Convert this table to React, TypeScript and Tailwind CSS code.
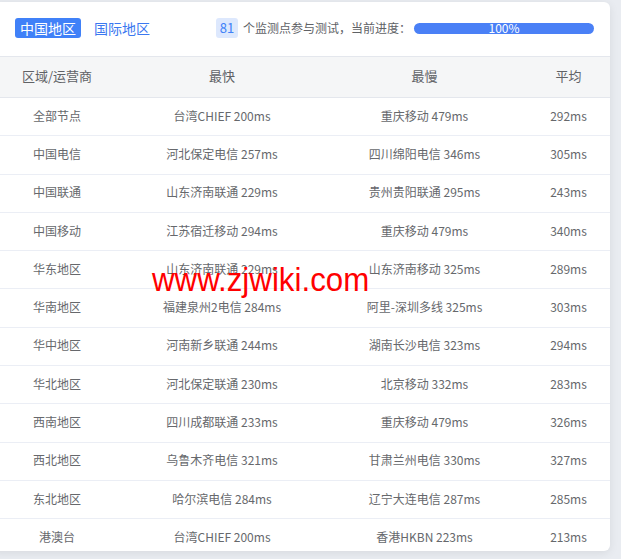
import React from 'react';

// Speed test summary card: region tabs, progress, and per-region fastest/slowest table.

const ROWS: [string, string, string, string][] = [
  ['全部节点', '台湾CHIEF 200ms', '重庆移动 479ms', '292ms'],
  ['中国电信', '河北保定电信 257ms', '四川绵阳电信 346ms', '305ms'],
  ['中国联通', '山东济南联通 229ms', '贵州贵阳联通 295ms', '243ms'],
  ['中国移动', '江苏宿迁移动 294ms', '重庆移动 479ms', '340ms'],
  ['华东地区', '山东济南联通 229ms', '山东济南移动 325ms', '289ms'],
  ['华南地区', '福建泉州2电信 284ms', '阿里-深圳多线 325ms', '303ms'],
  ['华中地区', '河南新乡联通 244ms', '湖南长沙电信 323ms', '294ms'],
  ['华北地区', '河北保定联通 230ms', '北京移动 332ms', '283ms'],
  ['西南地区', '四川成都联通 233ms', '重庆移动 479ms', '326ms'],
  ['西北地区', '乌鲁木齐电信 321ms', '甘肃兰州电信 330ms', '327ms'],
  ['东北地区', '哈尔滨电信 284ms', '辽宁大连电信 287ms', '285ms'],
  ['港澳台', '台湾CHIEF 200ms', '香港HKBN 223ms', '213ms'],
];

const GRID = 'grid grid-cols-[130px_200px_205px_83px]';

export default function App() {
  return (
    <div className="relative h-[559px] w-[621px] overflow-hidden bg-[#e9ecf1] pt-[2px] font-['Noto_Sans_CJK_SC',sans-serif]">
      <div className="-ml-2 h-[549px] w-[618px] overflow-hidden rounded-r-md bg-white shadow-[0_2px_10px_rgba(0,0,0,0.08)]">
        <div className="flex h-[55px] items-center border-b border-[#e4e7ed] pb-[2px] pl-[23px]">
          <button
            type="button"
            className="h-5 rounded-[3px] bg-[#4081f8] px-[5px] text-[14px] leading-5 text-white"
          >
            中国地区
          </button>
          <span className="ml-[13px] text-[14px] leading-5 text-[#3b78f0]">国际地区</span>
          <span className="ml-[66px] flex h-5 w-[22px] items-center justify-center rounded-[3px] bg-[#dde8fd] text-[13px] text-[#4081f8]">
            81
          </span>
          <span className="ml-[5px] text-[12px] text-[#606266]">个监测点参与测试，当前进度：</span>
          <div className="ml-[3px] flex h-[11px] w-[180px] items-center justify-center rounded-full bg-[#4a80f6] text-[12px] leading-none text-white">
            100%
          </div>
        </div>

        <div className={`${GRID} h-[41px] items-center border-b border-[#e4e7ed] bg-[#f5f6f7] pb-[3px] text-center text-[13px] text-[#606266]`}>
          <div>区域/运营商</div>
          <div>最快</div>
          <div>最慢</div>
          <div>平均</div>
        </div>

        {ROWS.map((r) => (
          <div
            key={r[0]}
            className={`${GRID} h-[38.3px] items-center border-b border-[#ebeef5] pb-[2px] text-center text-[12px] text-[#66686c]`}
          >
            <div>{r[0]}</div>
            <div>{r[1]}</div>
            <div>{r[2]}</div>
            <div>{r[3]}</div>
          </div>
        ))}
      </div>

      <div className="pointer-events-none absolute left-[152px] top-[262px] origin-left scale-x-[0.92] font-['Liberation_Sans',sans-serif] text-[34px] leading-none text-[#ff0000]">
        www.zjwiki.com
      </div>
    </div>
  );
}
